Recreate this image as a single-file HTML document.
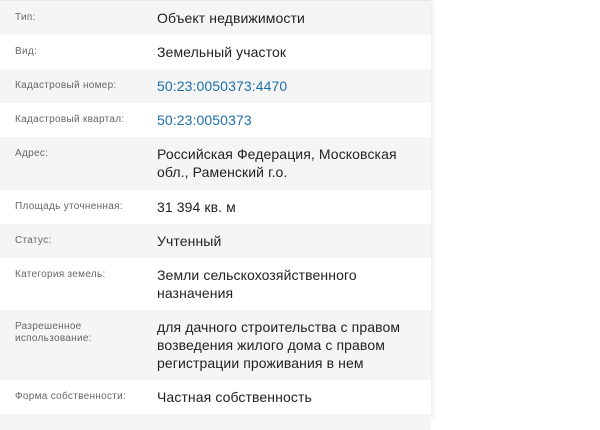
<!DOCTYPE html>
<html><head><meta charset="utf-8"><style>
body{margin:0;width:600px;height:417px;background:#fff;overflow:hidden;font-family:"Liberation Sans","DejaVu Sans",sans-serif;}
.p{position:absolute;left:0;top:0;width:431px;height:417px;box-shadow:2px 0 3px rgba(0,0,0,0.08);border-top:1px solid #e6e6e6;}
.r{display:flex;padding:8px 0 8px 0;box-sizing:border-box;overflow:hidden}
.r:nth-child(odd){background:#f5f5f5}
.l{width:142px;padding-left:15px;font-size:10px;color:#666;line-height:18px;flex:none;letter-spacing:0.3px}
.l.m{line-height:12px;padding-top:3px}
.v{font-size:14px;letter-spacing:0.1px;color:#222;line-height:18px;white-space:nowrap}
.a{color:#1f6fa8}
</style></head><body><div class="p">
<div class="r" style="height:34px"><div class="l">Тип:</div><div class="v">Объект недвижимости</div></div>
<div class="r" style="height:34px"><div class="l">Вид:</div><div class="v">Земельный участок</div></div>
<div class="r" style="height:34px"><div class="l">Кадастровый номер:</div><div class="v a">50:23:0050373:4470</div></div>
<div class="r" style="height:34px"><div class="l">Кадастровый квартал:</div><div class="v a">50:23:0050373</div></div>
<div class="r" style="height:53px"><div class="l">Адрес:</div><div class="v">Российская Федерация, Московская<br>обл., Раменский г.о.</div></div>
<div class="r" style="height:34px"><div class="l">Площадь уточненная:</div><div class="v">31 394 кв. м</div></div>
<div class="r" style="height:34px"><div class="l">Статус:</div><div class="v">Учтенный</div></div>
<div class="r" style="height:52px"><div class="l">Категория земель:</div><div class="v">Земли сельскохозяйственного<br>назначения</div></div>
<div class="r" style="height:70px"><div class="l m">Разрешенное<br>использование:</div><div class="v">для дачного строительства с правом<br>возведения жилого дома с правом<br>регистрации проживания в нем</div></div>
<div class="r" style="height:34px"><div class="l">Форма собственности:</div><div class="v">Частная собственность</div></div>
<div class="r" style="height:10px"></div>
</div></body></html>
